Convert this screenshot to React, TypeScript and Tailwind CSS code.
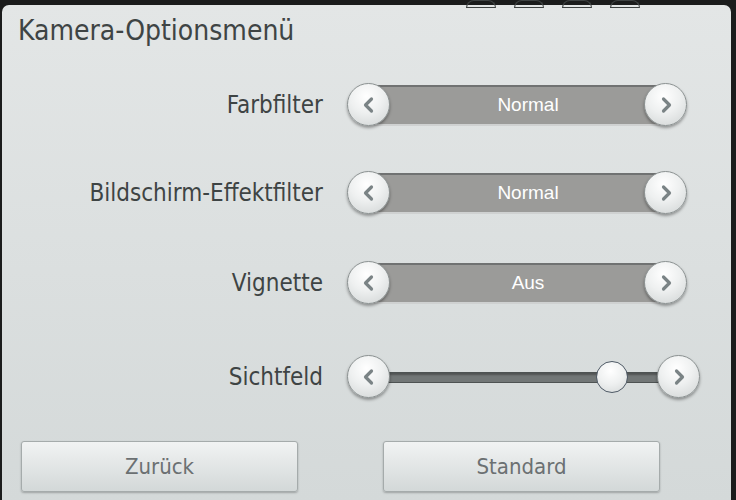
import React from "react";

const font = { fontFamily: '"DejaVu Sans", "Liberation Sans", sans-serif', fontStretch: "condensed" as const };

function Chevron({ dir }: { dir: "left" | "right" }) {
    return (
        <svg width="18" height="18" viewBox="0 0 18 18" fill="none">
            <path
                d={dir === "left" ? "M11.5 3 L5.5 9 L11.5 15" : "M6.5 3 L12.5 9 L6.5 15"}
                stroke="#7a8385"
                strokeWidth="3.2"
                strokeLinecap="round"
                strokeLinejoin="round"
            />
        </svg>
    );
}

function RoundButton({ dir, className }: { dir: "left" | "right"; className: string }) {
    return (
        <div
            className={
                "absolute top-0 flex h-[43px] w-[43px] items-center justify-center rounded-full border border-[#8c9292] bg-[radial-gradient(circle_at_45%_30%,#ffffff_0%,#eef0f0_45%,#cfd3d3_100%)] shadow-[0_2px_3px_rgba(0,0,0,0.35)] " +
                className
            }
        >
            <Chevron dir={dir} />
        </div>
    );
}

function Selector({ value }: { value: string }) {
    return (
        <div className="relative flex h-[44px] w-[340px] items-center px-[22px]">
            <div className="flex h-[41px] flex-1 items-center justify-center border-t-2 border-b-2 border-t-[#707272] border-b-[#cfd1d1] bg-[#9b9b99] pl-[22px]">
                <span className="text-[19px] text-white" style={{ fontFamily: '"Liberation Sans", sans-serif' }}>
                    {value}
                </span>
            </div>
            <RoundButton dir="left" className="left-0" />
            <RoundButton dir="right" className="right-0" />
        </div>
    );
}

function Slider() {
    return (
        <div className="relative flex h-[44px] w-[353px] items-center px-[40px]">
            <div className="h-[11px] flex-1 border border-[#4e5353] bg-[#727777] shadow-[inset_0_2px_2px_rgba(0,0,0,0.3)]" />
            <div className="absolute left-[249px] top-[6px] h-[32px] w-[32px] rounded-full border border-[#4f5a66] bg-[radial-gradient(circle_at_45%_30%,#ffffff_0%,#eef0f0_50%,#d3d7d7_100%)]" />
            <RoundButton dir="left" className="left-0" />
            <RoundButton dir="right" className="right-0" />
        </div>
    );
}

function Row({ label, children, className }: { label: string; children: React.ReactNode; className: string }) {
    return (
        <div className={"flex h-[44px] items-center " + className}>
            <div className="w-[321px] text-right text-[24px] text-[#3e4444]" style={font}>
                {label}
            </div>
            {children}
        </div>
    );
}

function FooterButton({ label }: { label: string }) {
    return (
        <button
            className="flex h-[51px] w-[277px] items-center justify-center rounded-[3px] border border-[#a5abab] bg-[linear-gradient(#f1f3f3,#d3d8d8)] text-[22px] text-[#6b7072] shadow-[0_1px_2px_rgba(0,0,0,0.25)]"
            style={font}
        >
            {label}
        </button>
    );
}

export default function App() {
    return (
        <div className="h-[500px] w-[736px] overflow-hidden bg-[#1b1c1c]">
            <div className="flex h-[5px] gap-[18px] pl-[466px]">
                <div className="h-[8px] w-[30px] rounded-t-[8px] border border-[#3e4242]" />
                <div className="h-[8px] w-[30px] rounded-t-[8px] border border-[#3e4242]" />
                <div className="h-[8px] w-[30px] rounded-t-[8px] border border-[#3e4242]" />
                <div className="h-[8px] w-[30px] rounded-t-[8px] border border-[#3e4242]" />
            </div>
            <div className="ml-[2px] h-[495px] w-[729px] rounded-t-[7px] bg-[linear-gradient(#e3e6e6,#d4d9d9)] pt-[8px]">
                <div className="pl-[16px] text-[28px] leading-[36px] text-[#3e4444]" style={font}>
                    Kamera-Optionsmenü
                </div>
                <Row label="Farbfilter" className="mt-[34px]">
                    <div className="ml-[24px]">
                        <Selector value="Normal" />
                    </div>
                </Row>
                <Row label="Bildschirm-Effektfilter" className="mt-[44px]">
                    <div className="ml-[24px]">
                        <Selector value="Normal" />
                    </div>
                </Row>
                <Row label="Vignette" className="mt-[46px]">
                    <div className="ml-[24px]">
                        <Selector value="Aus" />
                    </div>
                </Row>
                <Row label="Sichtfeld" className="mt-[50px]">
                    <div className="ml-[24px]">
                        <Slider />
                    </div>
                </Row>
                <div className="mt-[42px] flex pl-[19px]">
                    <FooterButton label="Zurück" />
                    <div className="ml-[85px]">
                        <FooterButton label="Standard" />
                    </div>
                </div>
            </div>
        </div>
    );
}
